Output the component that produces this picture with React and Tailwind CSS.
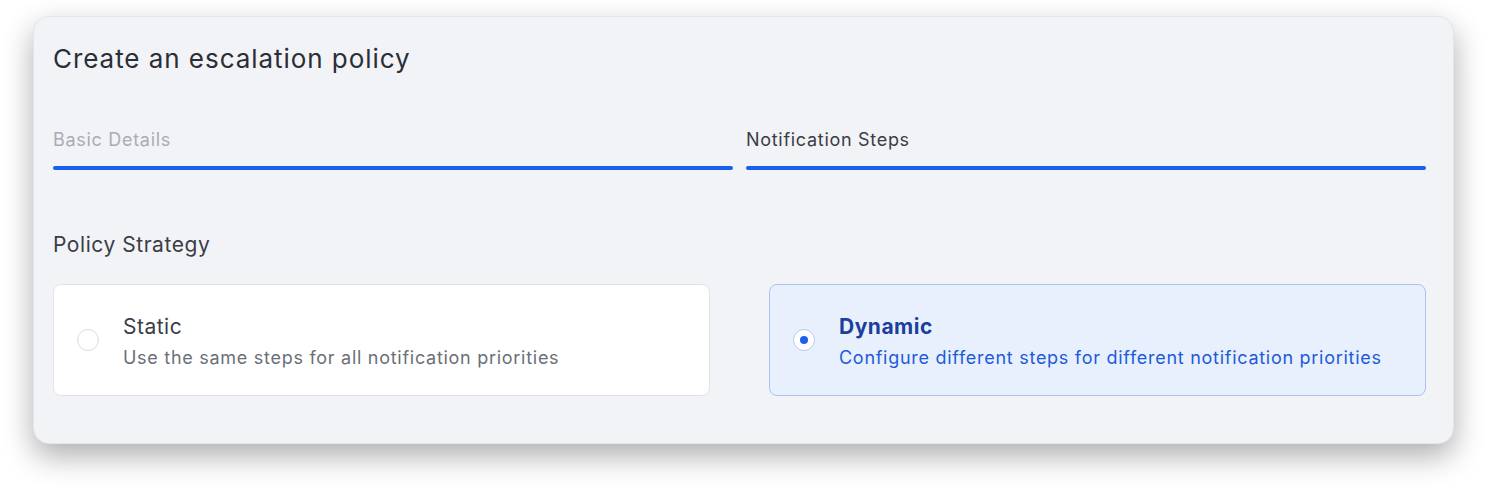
import React, { useState } from 'react'

const options = [
  { id: 'static', title: 'Static', desc: 'Use the same steps for all notification priorities' },
  { id: 'dynamic', title: 'Dynamic', desc: 'Configure different steps for different notification priorities' },
]

const App = () => {
  const [strategy, setStrategy] = useState('dynamic')

  return (
    <div className="min-h-screen bg-white pl-[33px] pr-[32px] pt-[16px]" style={{ fontFamily: 'Inter, "Noto Sans", sans-serif' }}>
      <div className="rounded-[16px] border border-[#e4e5e9] bg-[#f2f3f7] pl-[19px] pr-[27px] pt-[26px] pb-[47px] shadow-[0_12px_30px_rgba(0,0,0,0.32)]">
        <h1 className="text-[26px] leading-[32px] font-normal text-[#2b2e35] tracking-[0.95px]">Create an escalation policy</h1>

        <div className="mt-[53px] grid grid-cols-2 gap-[13px]">
          <div>
            <div className="text-[18px] leading-[24px] text-[#a9acb3] tracking-[0.7px]">Basic Details</div>
            <div className="mt-[14px] h-[4px] rounded-full bg-[#1a5ff0]" />
          </div>
          <div>
            <div className="text-[18px] leading-[24px] text-[#3a3d44] tracking-[0.7px]">Notification Steps</div>
            <div className="mt-[14px] h-[4px] rounded-full bg-[#1a5ff0]" />
          </div>
        </div>

        <h2 className="mt-[61px] text-[21px] leading-[28px] text-[#3a3d44] tracking-[0.55px]">Policy Strategy</h2>

        <div className="mt-[25px] grid grid-cols-2 gap-[59px]">
          {options.map((o) => {
            const active = strategy === o.id
            return (
              <button
                key={o.id}
                type="button"
                onClick={() => setStrategy(o.id)}
                className={
                  'flex h-[112px] items-center gap-[24px] rounded-[8px] border pl-[23px] text-left ' +
                  (active ? 'border-[#a9c2ef] bg-[#e8f0fd]' : 'border-[#e2e3e7] bg-white')
                }
              >
                <span
                  className={
                    'flex h-[22px] w-[22px] shrink-0 items-center justify-center rounded-full border bg-white ' +
                    (active ? 'border-[#b7caee]' : 'border-[#dcdde1]')
                  }
                >
                  {active && <span className="h-[8px] w-[8px] rounded-full bg-[#1a5ff0]" />}
                </span>
                <span className="flex flex-col pt-[5px]">
                  <span className={'text-[21px] leading-[26px] tracking-[0.5px] ' + (active ? 'font-bold text-[#1c3e9c]' : 'text-[#3a3d44]')}>
                    {o.title}
                  </span>
                  <span className={'mt-[5px] text-[18px] leading-[26px] tracking-[0.72px] ' + (active ? 'text-[#1d5bd8]' : 'text-[#6b6f78]')}>
                    {o.desc}
                  </span>
                </span>
              </button>
            )
          })}
        </div>
      </div>
    </div>
  )
}

export default App
